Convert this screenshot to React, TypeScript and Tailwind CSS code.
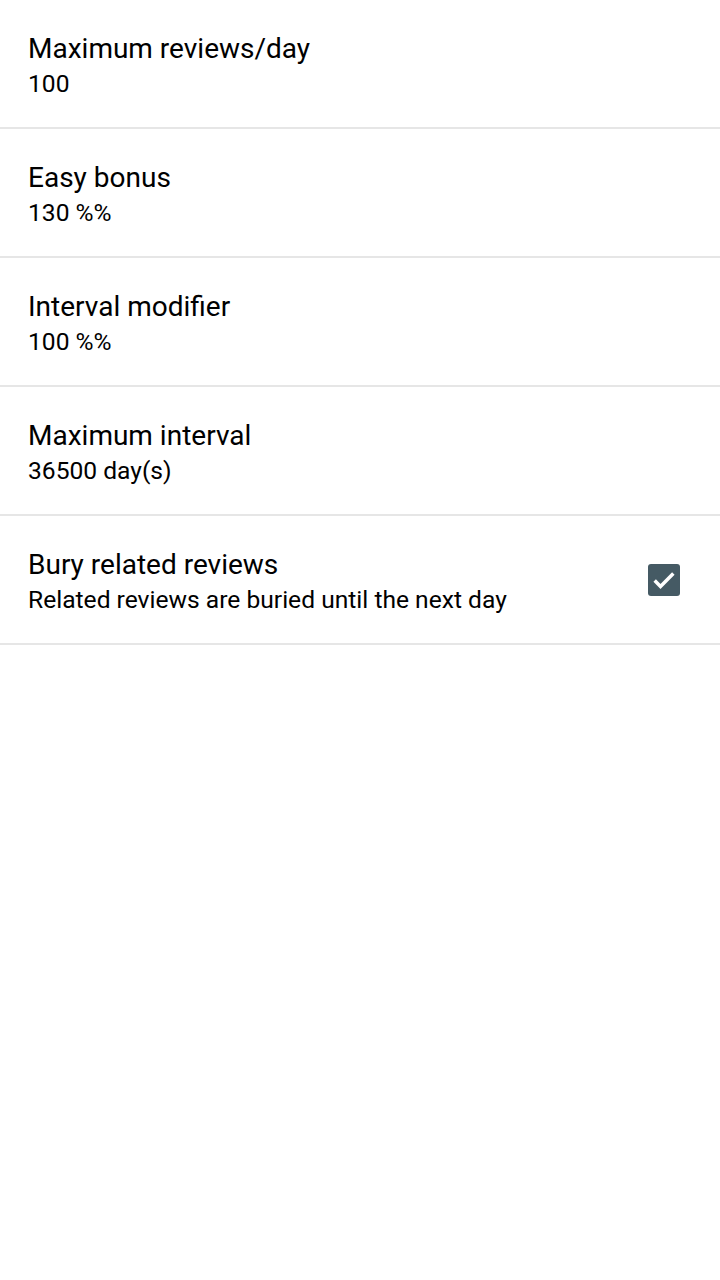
const items = [
  { title: "Maximum reviews/day", summary: "100" },
  { title: "Easy bonus", summary: "130 %%" },
  { title: "Interval modifier", summary: "100 %%" },
  { title: "Maximum interval", summary: "36500 day(s)" },
];

function Row({ title, summary, checked }: { title: string; summary: string; checked?: boolean }) {
  return (
    <div className="h-[129px] flex items-center pl-[28px] pr-[40px] border-b-2 border-[#e6e6e6]">
      <div className="flex-1 flex flex-col pt-[4px]">
        <div className="text-[28px] leading-[35px] text-[#000000]">{title}</div>
        <div className="text-[24.6px] leading-[35px] text-[#000000]">{summary}</div>
      </div>
      {checked !== undefined && (
        <div className="w-[32px] h-[32px] rounded-[3px] bg-[#455a64] flex items-center justify-center">
          <svg viewBox="0 0 24 24" className="w-[28px] h-[28px]" fill="none" stroke="white" strokeWidth={3}>
            <path d="M4 12.5l5 5L20 6.5" />
          </svg>
        </div>
      )}
    </div>
  );
}

export default function App() {
  return (
    <div className="w-[720px] h-[1280px] bg-white" style={{ fontFamily: "Roboto, 'Noto Sans', sans-serif" }}>
      {items.map((it) => (
        <Row key={it.title} title={it.title} summary={it.summary} />
      ))}
      <Row title="Bury related reviews" summary="Related reviews are buried until the next day" checked />
    </div>
  );
}
